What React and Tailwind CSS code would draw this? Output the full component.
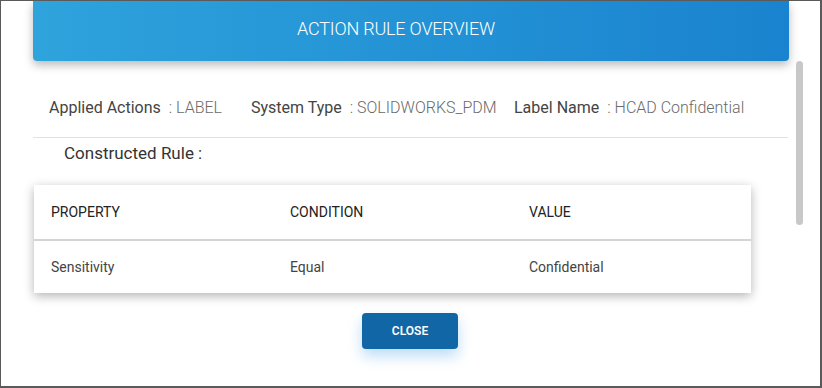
import React from "react";

const columns = ["PROPERTY", "CONDITION", "VALUE"];
const rows = [["Sensitivity", "Equal", "Confidential"]];

function InfoItem({ label, value, className }) {
  return (
    <div className={`flex items-baseline ${className}`}>
      <span className="text-[16px] text-[#444]">{label}</span>
      <span className="ml-[8px] text-[16px] font-light text-[#6a6a6a]">: {value}</span>
    </div>
  );
}

export default function App() {
  return (
    <div
      className="relative w-[822px] h-[388px] overflow-hidden bg-white border-t border-l border-r-2 border-b-2 border-[#5a5a5a]"
      style={{ fontFamily: "Roboto, 'Liberation Sans', sans-serif" }}
    >
      <div className="ml-[32px] mr-[31px] h-[60px] pb-[6px] pr-[30px] rounded-b-[4px] bg-gradient-to-r from-[#2ea3dc] to-[#1a83cf] shadow-[0_4px_10px_rgba(0,0,0,0.28)] flex items-center justify-center">
        <span className="text-[18px] font-light text-white tracking-[-0.2px]">ACTION RULE OVERVIEW</span>
      </div>

      {/* scrollbar thumb */}
      <div className="absolute left-[795px] top-[60px] w-[7px] h-[164px] rounded-full bg-[#c8c8c8]" />

      <div className="pl-[48px] pt-[35px] flex leading-[24px]">
        <InfoItem label="Applied Actions" value="LABEL" className="w-[202px]" />
        <InfoItem label="System Type" value="SOLIDWORKS_PDM" className="w-[263px]" />
        <InfoItem label="Label Name" value="HCAD Confidential" />
      </div>

      <div className="mt-[17px] ml-[32px] w-[755px] h-px bg-[#e2e2e2]" />

      <div className="pl-[63px] pt-[3px] text-[17px] leading-[24px] text-[#333]">Constructed Rule :</div>

      <div className="mt-[20px] ml-[33px] w-[717px] bg-white shadow-[0_3px_10px_rgba(0,0,0,0.3)]">
        <div className="flex h-[56px] items-center pl-[17px] border-b-2 border-[#d4d4d4]">
          {columns.map((c) => (
            <div key={c} className="w-[239px] flex-none text-[14px] text-[#222]">
              {c}
            </div>
          ))}
        </div>
        {rows.map((r) => (
          <div key={r[0]} className="flex h-[52px] items-center pl-[17px]">
            {r.map((v, i) => (
              <div key={i} className="w-[239px] flex-none text-[14px] text-[#444]">
                {v}
              </div>
            ))}
          </div>
        ))}
      </div>

      <div className="mt-[20px] flex justify-center pr-[1px]">
        <button className="w-[96px] h-[36px] rounded-[4px] bg-[#1167a6] text-white text-[12px] font-semibold shadow-[0_7px_14px_rgba(33,140,230,0.3)]">
          CLOSE
        </button>
      </div>
    </div>
  );
}
